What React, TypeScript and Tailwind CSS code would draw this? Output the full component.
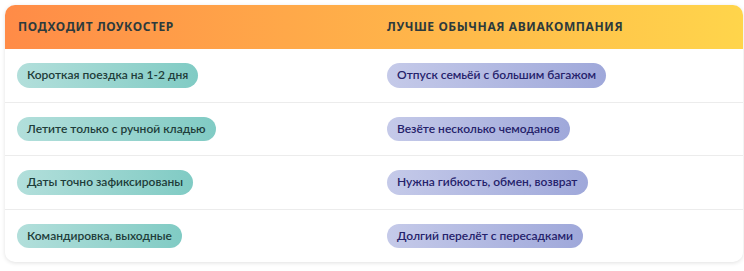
import React from "react";

type Row = { lowcost: string; airline: string };

const rows: Row[] = [
  { lowcost: "Короткая поездка на 1-2 дня", airline: "Отпуск семьёй с большим багажом" },
  { lowcost: "Летите только с ручной кладью", airline: "Везёте несколько чемоданов" },
  { lowcost: "Даты точно зафиксированы", airline: "Нужна гибкость, обмен, возврат" },
  { lowcost: "Командировка, выходные", airline: "Долгий перелёт с пересадками" },
];

const Pill = ({ children, tone }: { children: React.ReactNode; tone: "teal" | "indigo" }) => (
  <span
    className={
      tone === "teal"
        ? "rounded-full px-[10px] py-[3px] text-[12px] leading-[18.5px] font-semibold text-[#1e3d3a] bg-gradient-to-r from-[#b2dfdb] to-[#80cbc4]"
        : "rounded-full px-[10px] py-[3px] text-[12px] leading-[18.5px] font-semibold text-[#25226b] bg-gradient-to-r from-[#c5cae9] to-[#9fa8da]"
    }
  >
    {children}
  </span>
);

export default function App() {
  return (
    <div className="bg-white p-[5px] pr-[1px] font-['Lato','Noto_Sans',sans-serif]">
      <div className="overflow-hidden rounded-[10px] bg-white shadow-[0_1px_4px_rgba(0,0,0,0.12)]">
        <div className="grid grid-cols-2 bg-gradient-to-r from-[#ff8b47] to-[#ffd54b] font-['Noto_Sans',sans-serif] text-[12px] font-bold uppercase tracking-[0.6px] text-[#2d3a3c]">
          <div className="px-[13px] py-[14px] leading-[16px]">Подходит лоукостер</div>
          <div className="px-[13px] py-[14px] leading-[16px]">Лучше обычная авиакомпания</div>
        </div>
        {rows.map((row, i) => (
          <div
            key={row.lowcost}
            className={i < rows.length - 1 ? "grid grid-cols-2 border-b border-[#ececec]" : "grid grid-cols-2"}
          >
            <div className="flex items-start px-[12px] py-[14px]">
              <Pill tone="teal">{row.lowcost}</Pill>
            </div>
            <div className="flex items-start px-[13px] py-[14px]">
              <Pill tone="indigo">{row.airline}</Pill>
            </div>
          </div>
        ))}
      </div>
    </div>
  );
}
